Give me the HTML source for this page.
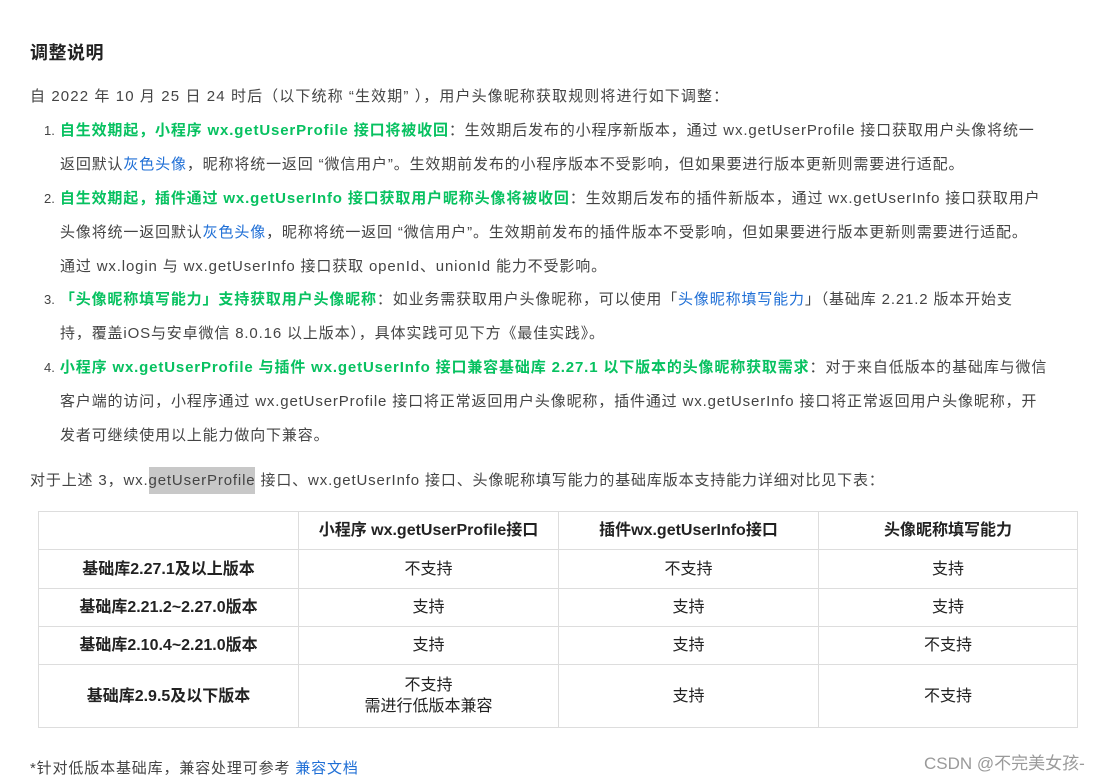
<!DOCTYPE html>
<html><head><meta charset="utf-8">
<style>
body{margin:0;width:1116px;height:783px;background:#fff;overflow:hidden;position:relative;font-family:"Liberation Sans","Noto Sans CJK SC",sans-serif;color:#444;font-size:15px}
.l{position:absolute;white-space:nowrap;line-height:20px;letter-spacing:0.85px}
.g{color:#07c160;font-weight:bold}
.b{color:#1f6fd6}
h2{position:absolute;left:30px;top:41px;margin:0;font-size:18px;color:#222;font-weight:bold;line-height:24px;letter-spacing:0.5px}
table{position:absolute;left:38px;top:511px;border-collapse:collapse;width:1040px;font-size:16px;color:#222}
td{border:1px solid #ddd;text-align:center;padding:0;line-height:21px}
td:first-child,tr:first-child td{font-weight:bold}
.sel{background:#c8c8c8}
</style></head><body>
<h2>调整说明</h2>
<div class="l" style="left:30px;top:87px;letter-spacing:1.1px">自 2022 年 10 月 25 日 24 时后（以下统称 “生效期” ），用户头像昵称获取规则将进行如下调整：</div>
<div class="l" style="left:44px;top:121px"><span style="font-size:13px;letter-spacing:0">1.</span> <span class="g">自生效期起，小程序 wx.getUserProfile 接口将被收回</span>：生效期后发布的小程序新版本，通过 wx.getUserProfile 接口获取用户头像将统一</div>
<div class="l" style="left:60px;top:155px">返回默认<span class="b">灰色头像</span>，昵称将统一返回 “微信用户”。生效期前发布的小程序版本不受影响，但如果要进行版本更新则需要进行适配。</div>
<div class="l" style="left:44px;top:189px"><span style="font-size:13px;letter-spacing:0">2.</span> <span class="g">自生效期起，插件通过 wx.getUserInfo 接口获取用户昵称头像将被收回</span>：生效期后发布的插件新版本，通过 wx.getUserInfo 接口获取用户</div>
<div class="l" style="left:60px;top:223px">头像将统一返回默认<span class="b">灰色头像</span>，昵称将统一返回 “微信用户”。生效期前发布的插件版本不受影响，但如果要进行版本更新则需要进行适配。</div>
<div class="l" style="left:60px;top:257px">通过 wx.login 与 wx.getUserInfo 接口获取 openId、unionId 能力不受影响。</div>
<div class="l" style="left:44px;top:290px"><span style="font-size:13px;letter-spacing:0">3.</span> <span class="g">「头像昵称填写能力」支持获取用户头像昵称</span>：如业务需获取用户头像昵称，可以使用「<span class="b">头像昵称填写能力</span>」（基础库 2.21.2 版本开始支</div>
<div class="l" style="left:60px;top:324px">持，覆盖iOS与安卓微信 8.0.16 以上版本），具体实践可见下方《最佳实践》。</div>
<div class="l" style="left:44px;top:358px"><span style="font-size:13px;letter-spacing:0">4.</span> <span class="g">小程序 wx.getUserProfile 与插件 wx.getUserInfo 接口兼容基础库 2.27.1 以下版本的头像昵称获取需求</span>：对于来自低版本的基础库与微信</div>
<div class="l" style="left:60px;top:392px">客户端的访问，小程序通过 wx.getUserProfile 接口将正常返回用户头像昵称，插件通过 wx.getUserInfo 接口将正常返回用户头像昵称，开</div>
<div class="l" style="left:60px;top:426px">发者可继续使用以上能力做向下兼容。</div>
<div class="l" style="left:30px;top:471px">对于上述 3，wx.<span class="sel" style="padding:5px 0">getUserProfile</span> 接口、wx.getUserInfo 接口、头像昵称填写能力的基础库版本支持能力详细对比见下表：</div>
<table>
<tr style="height:38px"><td style="width:259px"></td><td style="width:259px">小程序 wx.getUserProfile接口</td><td style="width:259px">插件wx.getUserInfo接口</td><td>头像昵称填写能力</td></tr>
<tr style="height:39px"><td>基础库2.27.1及以上版本</td><td>不支持</td><td>不支持</td><td>支持</td></tr>
<tr style="height:38px"><td>基础库2.21.2~2.27.0版本</td><td>支持</td><td>支持</td><td>支持</td></tr>
<tr style="height:38px"><td>基础库2.10.4~2.21.0版本</td><td>支持</td><td>支持</td><td>不支持</td></tr>
<tr style="height:63px"><td>基础库2.9.5及以下版本</td><td>不支持<br>需进行低版本兼容</td><td>支持</td><td>不支持</td></tr>
</table>
<div class="l" style="left:30px;top:759px">*针对低版本基础库，兼容处理可参考 <span class="b">兼容文档</span></div>
<div class="l" style="left:924px;top:754px;font-size:17px;color:#9a9a9a;letter-spacing:0">CSDN @不完美女孩-</div>
</body></html>
